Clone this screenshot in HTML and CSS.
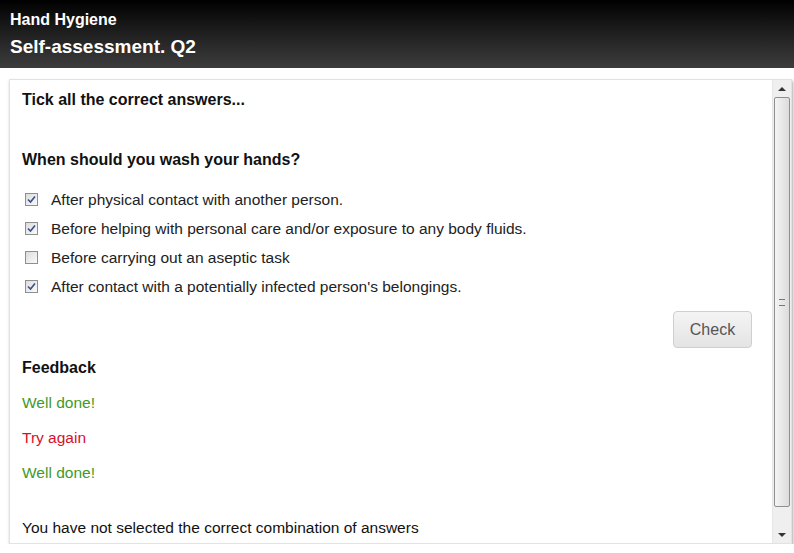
FILE: index.html
```html
<!DOCTYPE html>
<html>
<head>
<meta charset="utf-8">
<link rel="stylesheet" href="styles.css">
</head>
<body>
<header class="topbar">
  <div class="app-title">Hand Hygiene</div>
  <div class="page-title">Self-assessment. Q2</div>
</header>
<main class="panel">
  <div class="content">
    <div class="instruction">Tick all the correct answers...</div>
    <div class="question">When should you wash your hands?</div>
    <ul class="options">
      <li class="option"><span class="cb checked"><svg width="9" height="9" viewBox="0 0 9 9"><path d="M1 4.5 L3.5 7 L8 1.5" fill="none" stroke="#3b4f86" stroke-width="1.6"/></svg></span>After physical contact with another person.</li>
      <li class="option"><span class="cb checked"><svg width="9" height="9" viewBox="0 0 9 9"><path d="M1 4.5 L3.5 7 L8 1.5" fill="none" stroke="#3b4f86" stroke-width="1.6"/></svg></span>Before helping with personal care and/or exposure to any body fluids.</li>
      <li class="option"><span class="cb"></span>Before carrying out an aseptic task</li>
      <li class="option"><span class="cb checked"><svg width="9" height="9" viewBox="0 0 9 9"><path d="M1 4.5 L3.5 7 L8 1.5" fill="none" stroke="#3b4f86" stroke-width="1.6"/></svg></span>After contact with a potentially infected person's belongings.</li>
    </ul>
    <div class="actions"><button class="check-btn">Check</button></div>
    <div class="feedback-title">Feedback</div>
    <div class="fb good">Well done!</div>
    <div class="fb bad">Try again</div>
    <div class="fb good">Well done!</div>
    <div class="summary">You have not selected the correct combination of answers</div>
  </div>
  <div class="scrollbar">
    <div class="arrow up"></div>
    <div class="track"><div class="thumb"><span class="grip"></span></div></div>
    <div class="arrow down"></div>
  </div>
</main>
</body>
</html>
```
FILE: styles.css
```css
html, body {
  margin: 0;
  padding: 0;
  background: #fff;
  font-family: "Liberation Sans", Arial, sans-serif;
  color: #111;
}
.topbar {
  height: 68px;
  box-sizing: border-box;
  padding: 10px 10px 0;
  background: linear-gradient(#000 0%, #1a1a1a 40%, #3d3d3d 100%);
  color: #fff;
}
.app-title {
  font-weight: bold;
  font-size: 16px;
  line-height: 20px;
}
.page-title {
  font-weight: bold;
  font-size: 19px;
  line-height: 24px;
  margin-top: 5px;
}
.panel {
  margin: 11px 2px 0 9px;
  height: 465px;
  box-sizing: border-box;
  border: 1px solid #e2e2e2;
  box-shadow: 1px 2px 3px rgba(0,0,0,0.35);
  display: flex;
  background: #fff;
}
.content {
  flex: 1;
  padding: 10px 12px 0;
  font-size: 15.5px;
  color: #111;
}
.instruction {
  font-weight: bold;
  font-size: 16px;
  line-height: 20px;
}
.question {
  font-weight: bold;
  font-size: 16px;
  line-height: 20px;
  margin-top: 40px;
}
.options {
  list-style: none;
  margin: 15px 0 0;
  padding: 0;
}
.option {
  display: flex;
  align-items: center;
  height: 29px;
  color: #222;
}
.cb {
  width: 11px;
  height: 11px;
  border: 1px solid #8e8f8f;
  background: linear-gradient(135deg, #dcdcdc, #fafafa);
  margin: 0 13px 0 3px;
  display: flex;
  align-items: center;
  justify-content: center;
  flex: none;
}
.actions {
  display: flex;
  justify-content: flex-end;
  margin-top: 10px;
  padding-right: 8px;
}
.check-btn {
  width: 79px;
  height: 37px;
  border: 1px solid #cfcfcf;
  border-radius: 4px;
  background: linear-gradient(#f4f4f4, #e4e4e4);
  font-family: "Liberation Sans", Arial, sans-serif;
  font-size: 16px;
  color: #555;
}
.feedback-title {
  font-weight: bold;
  font-size: 16px;
  line-height: 20px;
  margin-top: 10px;
}
.fb {
  line-height: 20px;
  margin-top: 15px;
}
.good { color: #3f9a2a; }
.bad { color: #d8102a; }
.summary {
  line-height: 20px;
  margin-top: 35px;
}
.scrollbar {
  width: 18px;
  display: flex;
  flex-direction: column;
  background: #efefef;
  border-left: 1px solid #e6e6e6;
}
.arrow {
  height: 17px;
  display: flex;
  align-items: center;
  justify-content: center;
}
.arrow::after {
  content: "";
  border-left: 4px solid transparent;
  border-right: 4px solid transparent;
}
.arrow.up::after { border-bottom: 4px solid #333; }
.arrow.down::after { border-top: 4px solid #333; }
.track {
  flex: 1;
  padding-bottom: 19px;
  display: flex;
}
.thumb {
  flex: 1;
  margin: 0 1px;
  border: 1px solid #8f8f8f;
  border-radius: 2px;
  background: linear-gradient(90deg, #f4f4f4, #dcdcdc);
  display: flex;
  align-items: center;
  justify-content: center;
}
.grip {
  width: 6px;
  height: 5px;
  border-top: 1px solid #777;
  border-bottom: 1px solid #777;
}
```
